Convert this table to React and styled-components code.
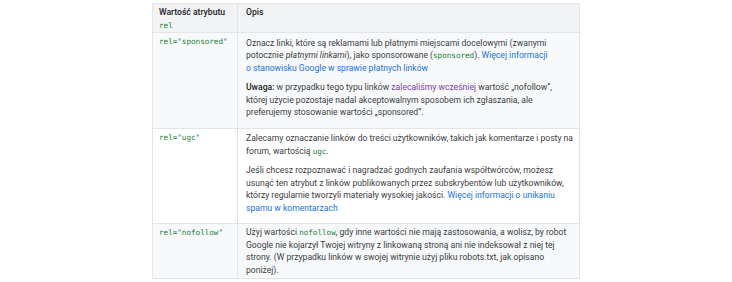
import React from "react";
import styled, { createGlobalStyle } from "styled-components";

const GlobalStyle = createGlobalStyle`
  html, body {
    margin: 0;
    padding: 0;
    background: #fff;
  }
`;

const Page = styled.div`
  display: flex;
  justify-content: center;
  padding-top: 3px;
  font-family: Roboto, "Noto Sans", sans-serif;
`;

const Table = styled.table`
  width: 428px;
  table-layout: fixed;
  border-collapse: collapse;
  border: 1px solid #e3e5e8;
  font-size: 8.6px;
  line-height: 12.5px;
  color: #3c4043;
`;

const Head = styled.th`
  background: #f1f3f4;
  text-align: left;
  vertical-align: top;
  font-weight: 500;
  color: #202124;
  padding: 2px ${(p) => (p.$key ? "6px" : "5px")} 1px 8px;
  padding-left: ${(p) => (p.$key ? "6px" : "8px")};
  border: 1px solid #e3e5e8;
  width: ${(p) => (p.$key ? "72px" : "auto")};
`;

const Row = styled.tr`
  background: ${(p) => (p.$shade ? "#f8f9fa" : "#fff")};
`;

const Cell = styled.td`
  vertical-align: top;
  padding: ${(p) => (p.$key ? "2px 6px 2px 6px" : "2px 5px 2px 8px")};
  border: 1px solid #e3e5e8;
`;

const Code = styled.code`
  font-family: "DejaVu Sans Mono", "Liberation Mono", monospace;
  font-size: 7.6px;
  line-height: 1;
  color: #188038;
`;

const Para = styled.p`
  margin: 1.5px 0 7px;
`;

const Link = styled.a`
  color: ${(p) => (p.$visited ? "#7b3fa8" : "#1a73e8")};
  text-decoration: none;
`;

const Strong = styled.strong`
  font-weight: 500;
  color: #202124;
`;

export default function App() {
  return (
    <>
      <GlobalStyle />
      <Page>
        <Table>
          <thead>
            <tr>
              <Head $key>
                Wartość atrybutu <Code>rel</Code>
              </Head>
              <Head>Opis</Head>
            </tr>
          </thead>
          <tbody>
            <Row $shade>
              <Cell $key>
                <Code>rel="sponsored"</Code>
              </Cell>
              <Cell>
                <Para>
                  Oznacz linki, które są reklamami lub płatnymi miejscami docelowymi (zwanymi
                  potocznie <em>płatnymi linkami</em>), jako sponsorowane (<Code>sponsored</Code>).{" "}
                  <Link href="#">
                    Więcej informacji o{"\u00a0"}stanowisku Google w{"\u00a0"}sprawie płatnych linków
                  </Link>
                </Para>
                <Para>
                  <Strong>Uwaga:</Strong> w{"\u00a0"}przypadku tego typu linków{" "}
                  <Link href="#" $visited>zalecaliśmy wcześniej</Link> wartość „nofollow”, której
                  użycie pozostaje nadal akceptowalnym sposobem ich zgłaszania, ale preferujemy
                  stosowanie wartości „sponsored”.
                </Para>
              </Cell>
            </Row>
            <Row>
              <Cell $key>
                <Code>rel="ugc"</Code>
              </Cell>
              <Cell>
                <Para>
                  Zalecamy oznaczanie linków do treści użytkowników, takich jak komentarze i
                  {"\u00a0"}posty na forum, wartością <Code>ugc</Code>.
                </Para>
                <Para>
                  Jeśli chcesz rozpoznawać i{"\u00a0"}nagradzać godnych zaufania współtwórców,
                  możesz usunąć ten atrybut z{"\u00a0"}linków publikowanych przez subskrybentów lub
                  użytkowników, którzy regularnie tworzyli materiały wysokiej jakości.{" "}
                  <Link href="#">
                    Więcej informacji o{"\u00a0"}unikaniu spamu w{"\u00a0"}komentarzach
                  </Link>
                </Para>
              </Cell>
            </Row>
            <Row $shade>
              <Cell $key>
                <Code>rel="nofollow"</Code>
              </Cell>
              <Cell>
                Użyj wartości <Code>nofollow</Code>, gdy inne wartości nie mają zastosowania, a
                {"\u00a0"}wolisz, by robot Google nie kojarzył Twojej witryny z{"\u00a0"}linkowaną
                stroną ani nie indeksował z{"\u00a0"}niej tej strony.{"\u00a0"}(W{"\u00a0"}przypadku
                linków w{"\u00a0"}swojej witrynie użyj pliku robots.txt, jak opisano poniżej).
              </Cell>
            </Row>
          </tbody>
        </Table>
      </Page>
    </>
  );
}
